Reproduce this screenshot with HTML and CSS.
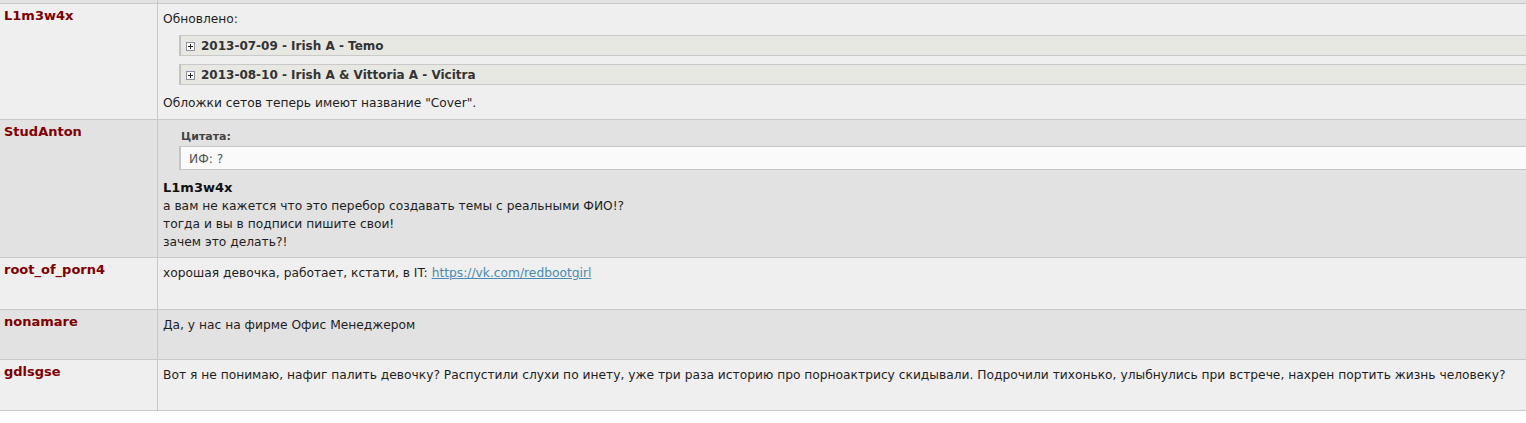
FILE: index.html
```html
<!doctype html>
<html>
<head>
<meta charset="utf-8">
<title>Тема</title>
<link rel="stylesheet" href="styles.css">
</head>
<body>

<div class="topic">
	<div class="post post-prev">
		<div class="post-author"></div>
		<div class="post-body"></div>
	</div>

	<div class="post row1">
		<div class="post-author"><span class="nick">L1m3w4x</span></div>
		<div class="post-body">
			<div class="line">Обновлено:</div>
			<div class="sp-wrap"><div class="sp-head"><svg class="sp-plus" width="9" height="9" viewBox="0 0 9 9"><rect x="0.5" y="0.5" width="8" height="8" fill="#fff" stroke="#8e8fa3"/><path d="M2 4.5h5M4.5 2v5" stroke="#222" stroke-width="1"/></svg>2013-07-09 - Irish A - Temo</div></div>
			<div class="sp-wrap"><div class="sp-head"><svg class="sp-plus" width="9" height="9" viewBox="0 0 9 9"><rect x="0.5" y="0.5" width="8" height="8" fill="#fff" stroke="#8e8fa3"/><path d="M2 4.5h5M4.5 2v5" stroke="#222" stroke-width="1"/></svg>2013-08-10 - Irish A &amp; Vittoria A - Vicitra</div></div>
			<div class="line after-sp">Обложки сетов теперь имеют название "Cover".</div>
		</div>
	</div>

	<div class="post row2 quoted">
		<div class="post-author"><span class="nick">StudAnton</span></div>
		<div class="post-body">
			<div class="q-wrap">
				<div class="q-head">Цитата:</div>
				<div class="q">ИФ: ?</div>
			</div>
			<div class="q-name">L1m3w4x</div>
			<div class="line">а вам не кажется что это перебор создавать темы с реальными ФИО!?</div>
			<div class="line">тогда и вы в подписи пишите свои!</div>
			<div class="line">зачем это делать?!</div>
		</div>
	</div>

	<div class="post row1 h52">
		<div class="post-author"><span class="nick">root_of_porn4</span></div>
		<div class="post-body">
			<div class="line">хорошая девочка, работает, кстати, в IT: <a href="#" class="postLink">https://vk.com/redbootgirl</a></div>
		</div>
	</div>

	<div class="post row2">
		<div class="post-author"><span class="nick">nonamare</span></div>
		<div class="post-body">
			<div class="line">Да, у нас на фирме Офис Менеджером</div>
		</div>
	</div>

	<div class="post row1 last">
		<div class="post-author"><span class="nick">gdlsgse</span></div>
		<div class="post-body">
			<div class="line">Вот я не понимаю, нафиг палить девочку? Распустили слухи по инету, уже три раза историю про порноактрису скидывали. Подрочили тихонько, улыбнулись при встрече, нахрен портить жизнь человеку?</div>
		</div>
	</div>
</div>

</body>
</html>
```

FILE: styles.css
```css
*{ margin:0; padding:0; box-sizing:border-box;}
body{ background:#fff; font-family:"DejaVu Sans", Verdana, sans-serif; font-size:12.25px; color:#1e1e1e; overflow-x:hidden;}

.topic{ width:100%;}
.post{ display:grid; grid-template-columns:158px 1fr; border-top:1px solid #c8c8c8; background:#efefef; min-height:50px;}
.post.row2{ background:#e2e2e2;}
.post.h52{ min-height:52px;}
.post.last{ border-bottom:1px solid #c8c8c8; min-height:52px;}
.post-prev{ min-height:0; height:3px; border-top:0; background:#e2e2e2;}

.post-author{ border-right:1px solid #c8c8c8; padding:3px 4px 0;}
.nick{ font-size:13px; line-height:18px; font-weight:bold; color:#800000;}

.post-body{ padding:6px 0 7px 5px; overflow:hidden; line-height:18px;}
.quoted .post-body{ padding-bottom:6px;}
.line{ line-height:18px;}
.after-sp{ padding-top:1px;}

/* спойлеры */
.sp-wrap{ margin:7px -10px 8px 16px;}
.sp-head{ background:#e8e8e3; border:1px solid #c9c9c9; border-left:2px solid #c2c2c2; padding:2px 0 0 5px; height:21px; font-size:12px; line-height:17px; font-weight:bold; color:#333;}
.sp-plus{ display:inline-block; vertical-align:-1px; margin-right:6px;}

/* цитата */
.q-wrap{ margin:3px -10px 0 16px;}
.q-head{ font-size:11px; line-height:16px; font-weight:bold; color:#444; padding-left:2px; margin-bottom:1px;}
.q{ background:#fafafa; border:1px solid #c8c8c8; border-left:2px solid #c4c4c4; padding:3px 8px 1px; color:#555; height:24px;}
.q-name{ margin-top:9px; font-size:13px; font-weight:bold; color:#111;}

a.postLink{ color:#4a8ab4; text-decoration:underline;}
```
